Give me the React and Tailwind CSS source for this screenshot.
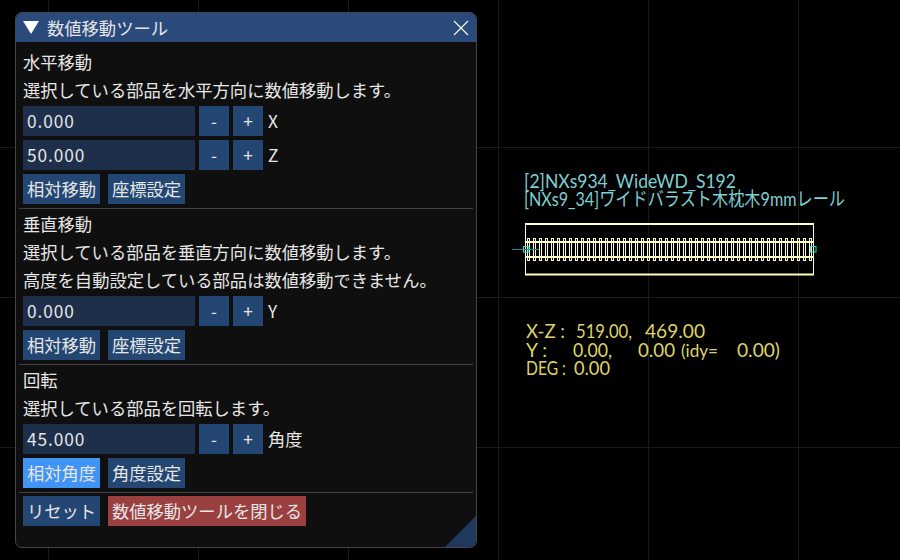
const gridXs = [48, 198, 348, 498, 648, 798];
const gridYs = [147, 297, 447];
const ties = Array.from({ length: 48 }, (_, i) => 527 + i * 6);

const Button = ({ children, className = 'bg-[#234673]', width = 'w-[77px]' }) => (
  <button className={`h-[30px] ${width} ${className} whitespace-nowrap text-center leading-[30px] text-[#e6e6e6]`}>
    {children}
  </button>
);

const NumberRow = ({ value, label }) => (
  <div className="flex h-[30px] items-center">
    <div className="h-[30px] w-[172px] bg-[#1d2f4a] pl-1 leading-[30px] tracking-[0.9px] text-[#e6e6e6]">{value}</div>
    <Button width="w-[30px] ml-1" className="bg-[#234673] text-[#c4ccd8]">-</Button>
    <Button width="w-[30px] ml-1">+</Button>
    <span className="ml-[5px] text-[#e6e6e6]">{label}</span>
  </div>
);

const ButtonRow = ({ children }) => <div className="flex gap-2">{children}</div>;
const Label = ({ children }) => <div className="h-6 whitespace-nowrap leading-6 text-[#e6e6e6]">{children}</div>;
const Separator = () => <div className="-mx-1 mb-[-1px] h-px bg-[#3e3e45]" />;

const Drawing = () => (
  <svg className="absolute inset-0" width="900" height="560" fill="none">
    {gridXs.map((x) => (
      <line key={x} x1={x + 0.5} y1="0" x2={x + 0.5} y2="560" stroke="#1a1a1a" />
    ))}
    {gridYs.map((y) => (
      <line key={y} x1="0" y1={y + 0.5} x2="900" y2={y + 0.5} stroke="#1a1a1a" />
    ))}

    <g stroke="#ffffc0" strokeWidth="1">
      {ties.map((x) => (
        <rect key={x} x={x + 0.5} y="238.5" width="2" height="22" />
      ))}
      <path d="M525.5 224V275M813.5 224V275" />
      <path d="M525 224H814M525 274.5H814M526 242H813M526 257H813" strokeWidth="2" />
    </g>
    <path d="M512 249.5H539" stroke="#0e8a94" />
    <rect x="523.5" y="246.5" width="5.5" height="5.5" stroke="#19e6f0" />
    <rect x="810.5" y="246.5" width="5.5" height="5.5" stroke="#19e6f0" />

    <g fill="#7fcfd4" fontFamily="'Lato', 'Noto Sans CJK JP', sans-serif" fontWeight="400" fontSize="19">
      <text x="524" y="188" textLength="212" lengthAdjust="spacingAndGlyphs">[2]NXs934_WideWD_S192</text>
      <text x="524" y="206" textLength="321" lengthAdjust="spacingAndGlyphs">[NXs9_34]ワイドバラスト木枕木9mmレール</text>
    </g>
    <g fill="#dcd468" fontFamily="'Lato', sans-serif" fontWeight="400" fontSize="19">
      <text x="526" y="338" textLength="39" lengthAdjust="spacingAndGlyphs">X-Z :</text>
      <text x="576" y="338" textLength="56" lengthAdjust="spacingAndGlyphs">519.00,</text>
      <text x="645" y="338" textLength="60" lengthAdjust="spacingAndGlyphs">469.00</text>
      <text x="526" y="357" textLength="21" lengthAdjust="spacingAndGlyphs">Y :</text>
      <text x="573" y="357" textLength="39" lengthAdjust="spacingAndGlyphs">0.00,</text>
      <text x="638" y="357" textLength="37" lengthAdjust="spacingAndGlyphs">0.00</text>
      <text x="681" y="357" textLength="37" lengthAdjust="spacingAndGlyphs" fontSize="17">(idy=</text>
      <text x="737" y="357" textLength="43" lengthAdjust="spacingAndGlyphs">0.00)</text>
      <text x="526" y="375" textLength="40" lengthAdjust="spacingAndGlyphs">DEG :</text>
      <text x="574" y="375" textLength="36" lengthAdjust="spacingAndGlyphs">0.00</text>
    </g>
  </svg>
);

export default function App() {
  return (
    <div className="relative h-[560px] w-[900px] overflow-hidden bg-black font-['Noto_Sans_CJK_JP',sans-serif] text-[17.3px]">
      <Drawing />

      <div className="absolute left-[15px] top-3 flex h-[536px] w-[462px] flex-col overflow-hidden rounded-[7px] border border-[#43434d] bg-[#0f0f0f]">
        <div className="flex h-[29px] shrink-0 items-center bg-[#294a7a] pl-[7px] pr-[7px] text-[#e6e6e6]">
          <svg width="16" height="13" viewBox="0 0 16 13">
            <path d="M0 0H16L8 13Z" fill="#fff" />
          </svg>
          <span className="ml-2 leading-[29px]">数値移動ツール</span>
          <svg className="ml-auto" width="16" height="16" viewBox="0 0 16 16" stroke="#fff" strokeWidth="1.1">
            <path d="M1 1L15 15M15 1L1 15" />
          </svg>
        </div>

        <div className="flex flex-col gap-1 px-[7px] pt-[8px]">
          <Label>水平移動</Label>
          <Label>選択している部品を水平方向に数値移動します。</Label>
          <NumberRow value="0.000" label="X" />
          <NumberRow value="50.000" label="Z" />
          <ButtonRow>
            <Button>相対移動</Button>
            <Button>座標設定</Button>
          </ButtonRow>
          <Separator />
          <Label>垂直移動</Label>
          <Label>選択している部品を垂直方向に数値移動します。</Label>
          <Label>高度を自動設定している部品は数値移動できません。</Label>
          <NumberRow value="0.000" label="Y" />
          <ButtonRow>
            <Button>相対移動</Button>
            <Button>座標設定</Button>
          </ButtonRow>
          <Separator />
          <Label>回転</Label>
          <Label>選択している部品を回転します。</Label>
          <NumberRow value="45.000" label="角度" />
          <ButtonRow>
            <Button className="bg-[#3f94f5]">相対角度</Button>
            <Button>角度設定</Button>
          </ButtonRow>
          <Separator />
          <ButtonRow>
            <Button>リセット</Button>
            <Button width="w-[198px]" className="bg-[#9a4040]">数値移動ツールを閉じる</Button>
          </ButtonRow>
        </div>

        <svg className="absolute bottom-0 right-0" width="31" height="31" viewBox="0 0 31 31">
          <path d="M31 0V31H0Z" fill="#1f3a5c" />
        </svg>
      </div>
    </div>
  );
}
